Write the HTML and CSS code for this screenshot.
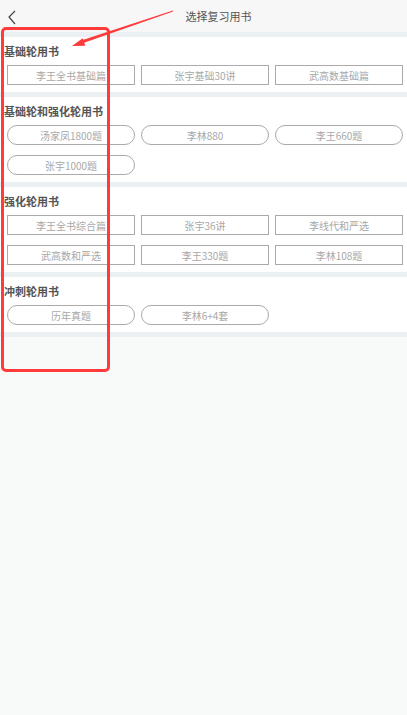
FILE: index.html
```html
<!DOCTYPE html>
<html lang="zh-CN">
<head>
    <meta charset="UTF-8">
    <meta name="viewport" content="width=device-width, initial-scale=1.0">
    <title>选择复习用书</title>
    <link rel="stylesheet" href="styles.css">
</head>
<body>
    <div class="header">
        <svg class="back" width="10" height="16" viewBox="0 0 10 16">
            <polyline points="8,1 2,7 8,14" fill="none" stroke="#444" stroke-width="1.2"/>
        </svg>
        <div class="header-title">选择复习用书</div>
    </div>

    <div class="section">
        <div class="section-title">基础轮用书</div>
        <div class="book-grid">
            <div class="book">李王全书基础篇</div>
            <div class="book">张宇基础30讲</div>
            <div class="book">武高数基础篇</div>
        </div>
    </div>

    <div class="section">
        <div class="section-title">基础轮和强化轮用书</div>
        <div class="book-grid">
            <div class="book pill">汤家凤1800题</div>
            <div class="book pill">李林880</div>
            <div class="book pill">李王660题</div>
            <div class="book pill">张宇1000题</div>
        </div>
    </div>

    <div class="section">
        <div class="section-title">强化轮用书</div>
        <div class="book-grid">
            <div class="book">李王全书综合篇</div>
            <div class="book">张宇36讲</div>
            <div class="book">李线代和严选</div>
            <div class="book">武高数和严选</div>
            <div class="book">李王330题</div>
            <div class="book">李林108题</div>
        </div>
    </div>

    <div class="section last">
        <div class="section-title">冲刺轮用书</div>
        <div class="book-grid">
            <div class="book pill">历年真题</div>
            <div class="book pill">李林6+4套</div>
        </div>
    </div>

    <!-- annotation drawn over the screenshot -->
    <div class="mark-box"></div>
    <svg class="mark-arrow" width="407" height="60" viewBox="0 0 407 60">
        <polygon points="173.1,11.4 172.9,10.6 79.5,41.1 80.5,43.9" fill="#ff3b3b"/>
        <polygon points="72,46 85.3,45.8 82.7,38.2" fill="#ff3b3b"/>
    </svg>
</body>
</html>
```

FILE: styles.css
```css
/* page */
body {
    font-family: "Noto Sans CJK SC", "Noto Sans", sans-serif;
    background-color: #f8f9f9;
    color: #555;
    margin: 0;
    min-height: 715px;
    position: relative;
}

.header {
    height: 32px;
    background-color: #f7f7f7;
    display: flex;
    align-items: center;
    justify-content: center;
    position: relative;
}

.back {
    position: absolute;
    left: 7px;
    top: 10px;
}

.header-title {
    font-size: 11px;
    color: #555;
    margin-left: 30px;
}

.section {
    background-color: #fff;
    border-top: 5px solid #ebf1f2;
    padding: 6px 4px 7px 7px;
}

.section.last {
    border-bottom: 5px solid #ebf1f2;
}

.section-title {
    font-size: 11px;
    font-weight: bold;
    color: #555;
    line-height: 16px;
    margin: 0 0 6px -3px;
}

.book-grid {
    display: grid;
    grid-template-columns: repeat(3, 128px);
    column-gap: 6px;
    row-gap: 10px;
}

.book {
    height: 20px;
    box-sizing: border-box;
    border: 1px solid #aaa;
    font-size: 10px;
    color: #a8a8a8;
    display: flex;
    align-items: center;
    justify-content: center;
}

.book.pill {
    border-radius: 10px;
}

/* red annotation */
.mark-box {
    position: absolute;
    left: 1px;
    top: 27px;
    width: 103px;
    height: 339px;
    border: 3px solid #ff3b3b;
    border-radius: 5px;
}

.mark-arrow {
    position: absolute;
    left: 0;
    top: 0;
}
```
